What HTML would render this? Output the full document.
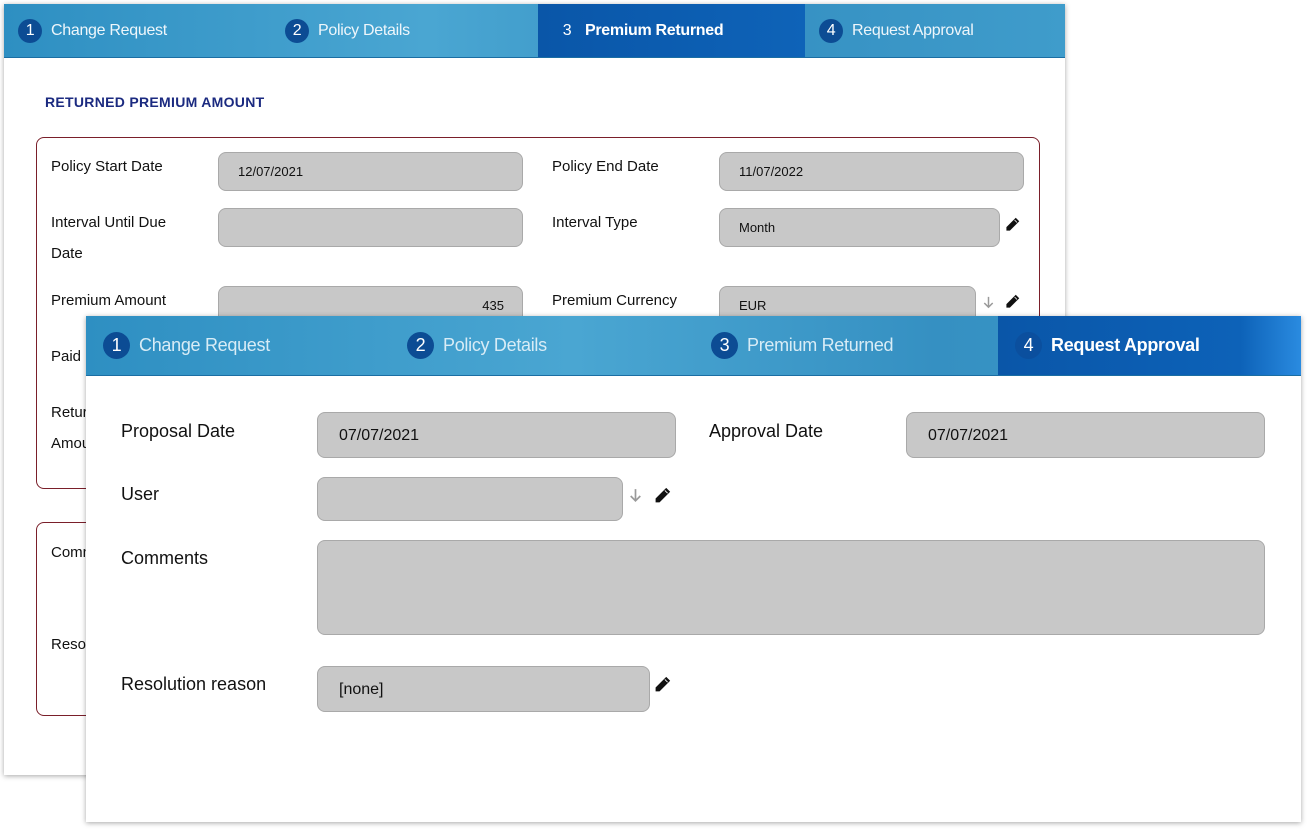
<!DOCTYPE html><html><head><style>
*{box-sizing:border-box;margin:0;padding:0}
body{width:1312px;height:831px;background:#fff;position:relative;overflow:hidden;font-family:"Liberation Sans",sans-serif;color:#111}
.panel{position:absolute;background:#fff;box-shadow:0 1px 5px rgba(0,0,0,.35)}
.tabs{position:absolute;left:0;top:0;right:0;background:linear-gradient(90deg,#2e8fc2,#4aa6d2 40%,#3590c2 70%,#3f9ccb);display:flex;border-bottom:1px solid #1b6ea3}
.tab{position:relative;color:#eef6fb;display:flex;align-items:center;letter-spacing:-.3px}
.tab.act{background:linear-gradient(90deg,#0a56a8,#0e63b8);color:#fff;font-weight:bold}
.num{display:inline-block;border-radius:50%;background:#0c4c94;color:#fff;text-align:center;font-weight:normal}
.abs{position:absolute}
.inp{position:absolute;background:#c8c8c8;border:1px solid #a9a9a9;border-radius:8px;color:#111}
.lbl{position:absolute;color:#111}
.box{position:absolute;border:1px solid #7a1f2a;border-radius:8px}
</style></head><body>
<svg width="0" height="0" style="position:absolute"><defs>
<symbol id="pen" viewBox="0 0 16 16"><path d="M11.5 1.5l3 3L5 14H2v-3z M10 3l3 3" fill="#111" stroke="#111" stroke-width="1"/><path d="M10.2 3.2l2.6 2.6" stroke="#fff" stroke-width="0.8"/></symbol>
<symbol id="arr" viewBox="0 0 16 16"><path d="M8 2v11M3.5 8.5L8 13l4.5-4.5" fill="none" stroke="#9a9a9a" stroke-width="1.6"/></symbol>
</defs></svg>
<div class="panel" style="left:4px;top:4px;width:1061px;height:771px">
 <div class="tabs" style="height:54px;font-size:16px">
  <div class="tab" style="width:267px;padding-left:14px"><span class="num" style="width:24px;height:24px;line-height:24px;margin-right:9px">1</span>Change Request</div>
  <div class="tab" style="width:267px;padding-left:14px"><span class="num" style="width:24px;height:24px;line-height:24px;margin-right:9px">2</span>Policy Details</div>
  <div class="tab act" style="width:267px;padding-left:17px"><span class="num" style="width:24px;height:24px;line-height:24px;margin-right:6px;background:transparent">3</span>Premium Returned</div>
  <div class="tab" style="width:260px;padding-left:14px"><span class="num" style="width:24px;height:24px;line-height:24px;margin-right:9px">4</span>Request Approval</div>
 </div>
 <div class="abs" style="left:41px;top:90px;font-size:14px;font-weight:bold;color:#1b2a80;letter-spacing:.3px">RETURNED PREMIUM AMOUNT</div>
 <div class="box" style="left:32px;top:133px;width:1004px;height:352px"></div>
 <div class="box" style="left:32px;top:518px;width:300px;height:194px"></div>
 <div style="font-size:15px">
 <div class="lbl" style="left:47px;top:154px">Policy Start Date</div>
 <div class="inp" style="left:214px;top:148px;width:305px;height:39px;padding:11px 0 0 19px;font-size:13px">12/07/2021</div>
 <div class="lbl" style="left:548px;top:154px">Policy End Date</div>
 <div class="inp" style="left:715px;top:148px;width:305px;height:39px;padding:11px 0 0 19px;font-size:13px">11/07/2022</div>
 <div class="lbl" style="left:47px;top:203px;line-height:31px">Interval Until Due<br>Date</div>
 <div class="inp" style="left:214px;top:204px;width:305px;height:39px"></div>
 <div class="lbl" style="left:548px;top:210px">Interval Type</div>
 <div class="inp" style="left:715px;top:204px;width:281px;height:39px;padding:11px 0 0 19px;font-size:13px">Month</div>
 <svg class="abs" style="left:1001px;top:213px" width="15" height="15"><use href="#pen"/></svg>
 <div class="lbl" style="left:47px;top:288px">Premium Amount</div>
 <div class="inp" style="left:214px;top:282px;width:305px;height:39px;padding:11px 18px 0 0;font-size:13px;text-align:right">435</div>
 <div class="lbl" style="left:548px;top:288px">Premium Currency</div>
 <div class="inp" style="left:715px;top:282px;width:257px;height:39px;padding:11px 0 0 19px;font-size:13px">EUR</div>
 <svg class="abs" style="left:977px;top:291px" width="15" height="15"><use href="#arr"/></svg>
 <svg class="abs" style="left:1001px;top:290px" width="15" height="15"><use href="#pen"/></svg>
 <div class="lbl" style="left:47px;top:344px">Paid</div>
 <div class="lbl" style="left:47px;top:393px;line-height:31px">Retur<br>Amou</div>
 <div class="lbl" style="left:47px;top:540px">Comm</div>
 <div class="lbl" style="left:47px;top:632px">Reso</div>
 </div>
</div>
<div class="panel" style="left:86px;top:316px;width:1215px;height:506px">
 <div class="tabs" style="height:60px;font-size:18px">
  <div class="tab" style="width:304px;padding-left:17px;color:#d8ecf6"><span class="num" style="width:27px;height:27px;line-height:27px;margin-right:9px">1</span>Change Request</div>
  <div class="tab" style="width:304px;padding-left:17px;color:#d8ecf6"><span class="num" style="width:27px;height:27px;line-height:27px;margin-right:9px">2</span>Policy Details</div>
  <div class="tab" style="width:304px;padding-left:17px;color:#d8ecf6"><span class="num" style="width:27px;height:27px;line-height:27px;margin-right:9px">3</span>Premium Returned</div>
  <div class="tab act" style="width:303px;padding-left:17px;background:linear-gradient(90deg,#0a56a8,#0d62b8 80%,#2a8be0)"><span class="num" style="width:27px;height:27px;line-height:27px;margin-right:9px;background:#0b4f9e">4</span>Request Approval</div>
 </div>
 <div style="font-size:18px">
 <div class="lbl" style="left:35px;top:105px">Proposal Date</div>
 <div class="inp" style="left:231px;top:96px;width:359px;height:46px;padding:14px 0 0 21px;font-size:16px">07/07/2021</div>
 <div class="lbl" style="left:623px;top:105px">Approval Date</div>
 <div class="inp" style="left:820px;top:96px;width:359px;height:46px;padding:14px 0 0 21px;font-size:16px">07/07/2021</div>
 <div class="lbl" style="left:35px;top:168px">User</div>
 <div class="inp" style="left:231px;top:161px;width:306px;height:44px"></div>
 <svg class="abs" style="left:541px;top:171px" width="17" height="17"><use href="#arr"/></svg>
 <svg class="abs" style="left:568px;top:171px" width="17" height="17"><use href="#pen"/></svg>
 <div class="lbl" style="left:35px;top:232px">Comments</div>
 <div class="inp" style="left:231px;top:224px;width:948px;height:95px"></div>
 <div class="lbl" style="left:35px;top:358px">Resolution reason</div>
 <div class="inp" style="left:231px;top:350px;width:333px;height:46px;padding:14px 0 0 21px;font-size:16px">[none]</div>
 <svg class="abs" style="left:568px;top:360px" width="17" height="17"><use href="#pen"/></svg>
 </div>
</div>
</body></html>
